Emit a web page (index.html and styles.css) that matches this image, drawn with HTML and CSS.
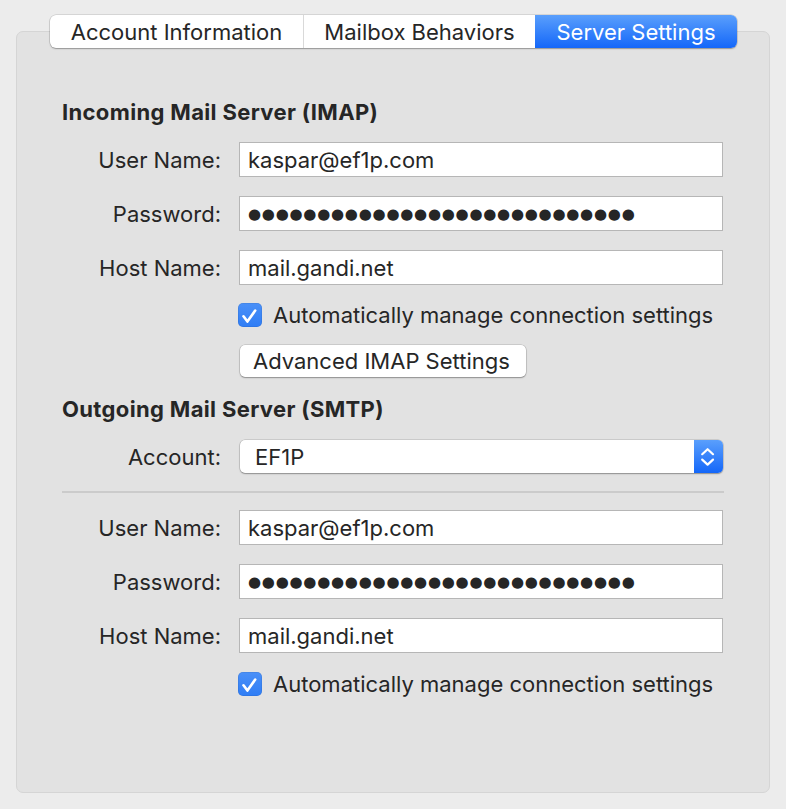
FILE: index.html
```html
<!DOCTYPE html>
<html>
<head>
<meta charset="utf-8">
<link rel="stylesheet" href="styles.css">
</head>
<body>
<div class="window">
  <div class="tabs">
    <div class="tab tab-1">Account Information</div>
    <div class="tab tab-2">Mailbox Behaviors</div>
    <div class="tab tab-3 active">Server Settings</div>
  </div>
  <div class="panel">
    <h2 class="heading h-in">Incoming Mail Server (IMAP)</h2>
    <div class="row r-first">
      <label class="label">User Name:</label>
      <div class="field">kaspar@ef1p.com</div>
    </div>
    <div class="row">
      <label class="label">Password:</label>
      <div class="field"><span class="dots">●●●●●●●●●●●●●●●●●●●●●●●●●●●●</span></div>
    </div>
    <div class="row">
      <label class="label">Host Name:</label>
      <div class="field">mail.gandi.net</div>
    </div>
    <div class="check-row c-in">
      <span class="checkbox"><svg width="24" height="24" viewBox="0 0 24 24"><path d="M5.5 13.3 L9.4 18.6 L17.2 7.6" fill="none" stroke="#fff" stroke-width="2.6" stroke-linecap="round" stroke-linejoin="round"/></svg></span>
      <span class="check-label">Automatically manage connection settings</span>
    </div>
    <div class="btn-row">
      <button class="button">Advanced IMAP Settings</button>
    </div>
    <h2 class="heading h-out">Outgoing Mail Server (SMTP)</h2>
    <div class="row popup-row">
      <label class="label">Account:</label>
      <div class="popup">
        <span class="popup-text">EF1P</span>
        <span class="stepper"><svg width="29" height="33" viewBox="0 0 29 33"><path d="M8.2 14.2 L13.6 9.2 L19 14.2 M8.2 19.6 L13.6 24.6 L19 19.6" fill="none" stroke="#fff" stroke-width="2.2" stroke-linecap="round" stroke-linejoin="round"/></svg></span>
      </div>
    </div>
    <div class="separator"></div>
    <div class="row r-out">
      <label class="label">User Name:</label>
      <div class="field">kaspar@ef1p.com</div>
    </div>
    <div class="row">
      <label class="label">Password:</label>
      <div class="field"><span class="dots">●●●●●●●●●●●●●●●●●●●●●●●●●●●●</span></div>
    </div>
    <div class="row">
      <label class="label">Host Name:</label>
      <div class="field">mail.gandi.net</div>
    </div>
    <div class="check-row c-out">
      <span class="checkbox"><svg width="24" height="24" viewBox="0 0 24 24"><path d="M5.5 13.3 L9.4 18.6 L17.2 7.6" fill="none" stroke="#fff" stroke-width="2.6" stroke-linecap="round" stroke-linejoin="round"/></svg></span>
      <span class="check-label">Automatically manage connection settings</span>
    </div>
  </div>
</div>
</body>
</html>
```

FILE: styles.css
```css
* { box-sizing: border-box; }
html, body {
  margin: 0;
  padding: 0;
  background: #ececec;
}
body {
  font-family: Inter, "Liberation Sans", sans-serif;
  font-size: 22px;
  color: #262626;
  width: 786px;
  height: 809px;
  overflow: hidden;
}
.window {
  padding: 15px 0 0 0;
}
.tabs {
  position: relative;
  z-index: 2;
  display: flex;
  margin-left: 50px;
  width: 687px;
  height: 33px;
  background: #fff;
  border-radius: 6px;
  box-shadow: 0 0 0 0.5px rgba(0,0,0,0.18), 0 1px 1.5px rgba(0,0,0,0.28);
  overflow: hidden;
}
.tab {
  display: flex;
  align-items: center;
  justify-content: center;
  height: 100%;
  line-height: 1;
  white-space: nowrap;
}
.tab-1 { width: 254px; border-right: 1px solid #d9d9d9; }
.tab-2 { width: 231px; }
.tab-3 { width: 202px; }
.tab.active {
  color: #fff;
  background: linear-gradient(#5a9ffc, #1467f9);
}
.panel {
  margin: -17px 0 0 16px;
  width: 754px;
  height: 762px;
  background: #e2e2e2;
  border: 1px solid #d5d5d5;
  border-radius: 7px;
  padding: 68px 0 0 45px;
  display: flex;
  flex-direction: column;
}
.heading {
  margin: 0;
  font-size: 22px;
  font-weight: 700;
  letter-spacing: 0.35px;
  line-height: 24px;
  height: 24px;
  color: #262626;
  white-space: nowrap;
}
.h-out { margin-top: 20px; }
.row {
  display: grid;
  grid-template-columns: 159px 484px;
  column-gap: 18px;
  align-items: center;
  height: 35px;
  margin-top: 19px;
}
.r-first { margin-top: 18px; }
.r-out { margin-top: 17px; }
.label {
  text-align: right;
  white-space: nowrap;
}
.field {
  height: 35px;
  background: #fff;
  border: 1px solid #b6b6b6;
  padding: 0 8px;
  display: flex;
  align-items: center;
  white-space: nowrap;
  overflow: hidden;
}
.dots {
  font-family: "DejaVu Sans", sans-serif;
  font-size: 15px;
  letter-spacing: 0.75px;
  color: #262626;
}
.check-row {
  display: flex;
  align-items: center;
  height: 24px;
  margin-top: 18px;
  margin-left: 176px;
}
.c-out { margin-top: 19px; }
.checkbox {
  width: 24px;
  height: 24px;
  border-radius: 5px;
  background: linear-gradient(#4a90f8, #2f7df5);
  box-shadow: inset 0 0 0 0.5px rgba(0,0,0,0.12);
  display: flex;
  flex: none;
}
.check-label {
  margin-left: 11px;
  white-space: nowrap;
}
.btn-row {
  margin-top: 18px;
  margin-left: 178px;
  height: 32px;
  display: flex;
}
.button {
  font: inherit;
  color: #262626;
  height: 32px;
  width: 286px;
  background: #fff;
  border: none;
  border-radius: 5px;
  box-shadow: 0 0 0 0.5px rgba(0,0,0,0.2), 0 1px 1.5px rgba(0,0,0,0.3);
  padding: 0 0 0 13px;
  text-align: left;
  white-space: nowrap;
}
.popup-row {
  height: 33px;
}
.popup {
  position: relative;
  height: 33px;
  width: 483px;
  margin-left: 1px;
  background: #fff;
  border-radius: 5px;
  box-shadow: 0 0 0 0.5px rgba(0,0,0,0.2), 0 1px 1.5px rgba(0,0,0,0.3);
  display: flex;
  align-items: center;
  justify-content: space-between;
  overflow: hidden;
}
.popup-text {
  padding-left: 15px;
}
.stepper {
  width: 29px;
  height: 33px;
  background: linear-gradient(#5a9ffc, #1467f9);
  display: flex;
}
.separator {
  margin-top: 18px;
  width: 662px;
  height: 2px;
  background: #cbcbcb;
}
```
